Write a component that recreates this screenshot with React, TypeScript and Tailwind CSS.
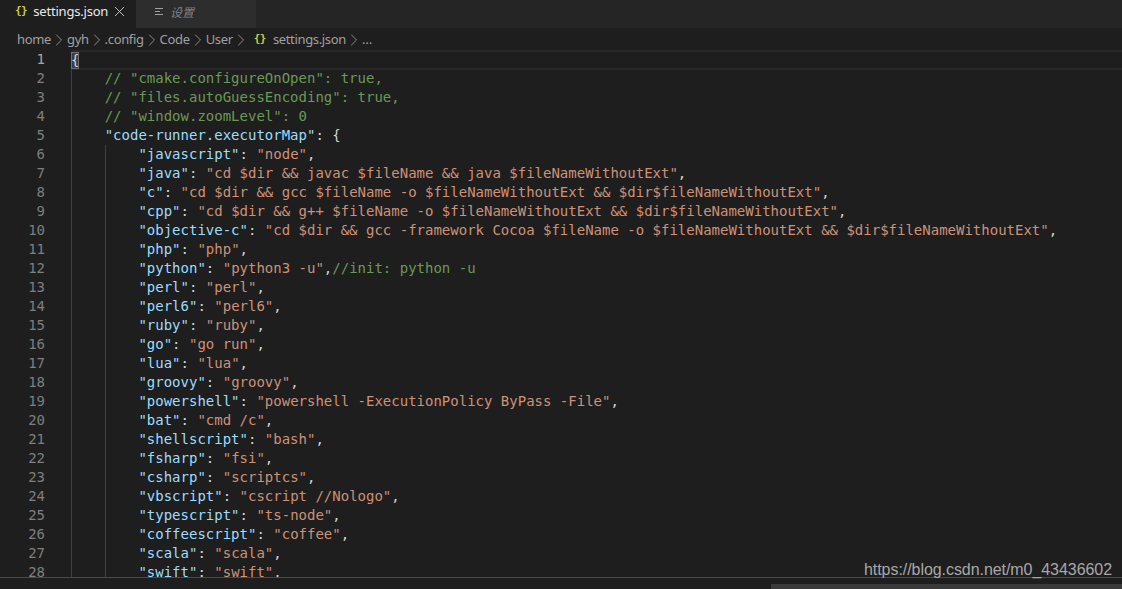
import { ChevronRight, X } from 'lucide-react'
import React from 'react'

type Pair = [string, string, string?]

const entries: Pair[] = [
  ['javascript', 'node'],
  ['java', 'cd $dir && javac $fileName && java $fileNameWithoutExt'],
  ['c', 'cd $dir && gcc $fileName -o $fileNameWithoutExt && $dir$fileNameWithoutExt'],
  ['cpp', 'cd $dir && g++ $fileName -o $fileNameWithoutExt && $dir$fileNameWithoutExt'],
  ['objective-c', 'cd $dir && gcc -framework Cocoa $fileName -o $fileNameWithoutExt && $dir$fileNameWithoutExt'],
  ['php', 'php'],
  ['python', 'python3 -u', '//init: python -u'],
  ['perl', 'perl'],
  ['perl6', 'perl6'],
  ['ruby', 'ruby'],
  ['go', 'go run'],
  ['lua', 'lua'],
  ['groovy', 'groovy'],
  ['powershell', 'powershell -ExecutionPolicy ByPass -File'],
  ['bat', 'cmd /c'],
  ['shellscript', 'bash'],
  ['fsharp', 'fsi'],
  ['csharp', 'scriptcs'],
  ['vbscript', 'cscript //Nologo'],
  ['typescript', 'ts-node'],
  ['coffeescript', 'coffee'],
  ['scala', 'scala'],
  ['swift', 'swift']
]

function Line({ num, indent, children }: { num: number; indent: number; children?: React.ReactNode }) {
  return (
    <div className="flex h-[19px] leading-[19px] shrink-0">
      <div className="w-[45px] text-right text-[#7f7f7f]">{num}</div>
      <div className="w-[26px] shrink-0" />
      {Array.from({ length: indent }).map((_, i) => (
        <span key={i} className="w-[33.7px] shrink-0 border-l border-[#404040]" />
      ))}
      <div className="whitespace-pre">{children}</div>
    </div>
  )
}

function Braces({ className }: { className: string }) {
  return <span className={`font-['DejaVu_Sans_Mono',monospace] font-bold text-[11px] tracking-[-0.5px] text-[#cbcb41] ${className}`}>{'{}'}</span>
}

function Crumb({ label }: { label: string }) {
  return (
    <>
      <span>{label}</span>
      <ChevronRight size={20} strokeWidth={1} className="text-[#a0a0a0] -mx-[2px]" />
    </>
  )
}

export default function App() {
  return (
    <div className="h-[589px] w-[1122px] relative overflow-hidden flex flex-col bg-[#1e1e1e] font-['Noto_Sans',sans-serif]">
      <div className="h-[28px] flex bg-[#252526] shrink-0">
        <div className="w-[136px] bg-[#1e1e1e] flex items-center pl-[15px] pb-[5px] text-[13px] text-[#e8e8e8]">
          <Braces className="mr-[6px]" />
          <span className="tracking-[-0.2px]">settings.json</span>
          <X size={17} strokeWidth={1.3} className="ml-[3px] text-[#d0d0d0]" />
        </div>
        <div className="w-[120px] bg-[#2d2d2d] flex items-center pl-[18px] pb-[5px] text-[12px] italic text-[#808080]">
          <svg width="10" height="10" viewBox="0 0 10 10" className="mr-[6px]" stroke="#a0a0a0" strokeWidth="1">
            <path d="M1 1.5h8M1 4.5h5M1 7.5h8" />
          </svg>
          <span className="font-['Noto_Sans_CJK_SC',sans-serif]">设置</span>
        </div>
      </div>
      <div className="h-[22px] shrink-0 flex items-center pl-[17px] pt-[1px] text-[13px] text-[#a0a0a0] tracking-[-0.35px]">
        <Crumb label="home" />
        <Crumb label="gyh" />
        <Crumb label=".config" />
        <Crumb label="Code" />
        <Crumb label="User" />
        <Braces className="ml-[5px] mr-[7px]" />
        <Crumb label="settings.json" />
        <span className="tracking-[0.5px]">…</span>
      </div>
      <div className="h-[527px] flex flex-col overflow-hidden font-['DejaVu_Sans_Mono',monospace] text-[14px] text-[#d4d4d4] relative">
        <div className="flex h-[19px] leading-[19px] shrink-0">
          <div className="w-[45px] text-right text-[#a6a6a6]">1</div>
          <div className="w-[26px] shrink-0" />
          <div className="flex-1 border-y-2 border-[#282828] -mb-px flex items-center">
            <span className="bg-[#3a3d41] outline outline-[#707070] -outline-offset-1 leading-[17px]">{'{'}</span>
          </div>
        </div>
        <Line num={2} indent={1}><span className="text-[#6a9955]">{'// "cmake.configureOnOpen": true,'}</span></Line>
        <Line num={3} indent={1}><span className="text-[#6a9955]">{'// "files.autoGuessEncoding": true,'}</span></Line>
        <Line num={4} indent={1}><span className="text-[#6a9955]">{'// "window.zoomLevel": 0'}</span></Line>
        <Line num={5} indent={1}>
          <span className="text-[#9cdcfe]">"code-runner.executorMap"</span>{': {'}
        </Line>
        {entries.map(([key, value, comment], i) => (
          <Line key={key} num={i + 6} indent={2}>
            <span className="text-[#9cdcfe]">"{key}"</span>
            {': '}
            <span className="text-[#ce9178]">"{value}"</span>,
            {comment && <span className="text-[#6a9955]">{comment}</span>}
          </Line>
        ))}
      </div>
      <div className="h-[1px] bg-[#4a4a4a] shrink-0 absolute left-0 right-0 top-[577px]" />
      <div className="h-[11px] shrink-0 flex justify-end absolute left-0 right-0 top-[578px] bg-[#1e1e1e]">
        <div className="w-[351px] h-[5px] mt-[6px] bg-[#3a3a3a]" />
      </div>
      <div className="absolute left-[864px] top-[560px] text-[16px] tracking-[-0.06px] leading-[20px] text-[#a8a8a8] font-['Liberation_Sans',sans-serif]">
        https://blog.csdn.net/m0_43436602
      </div>
    </div>
  )
}
